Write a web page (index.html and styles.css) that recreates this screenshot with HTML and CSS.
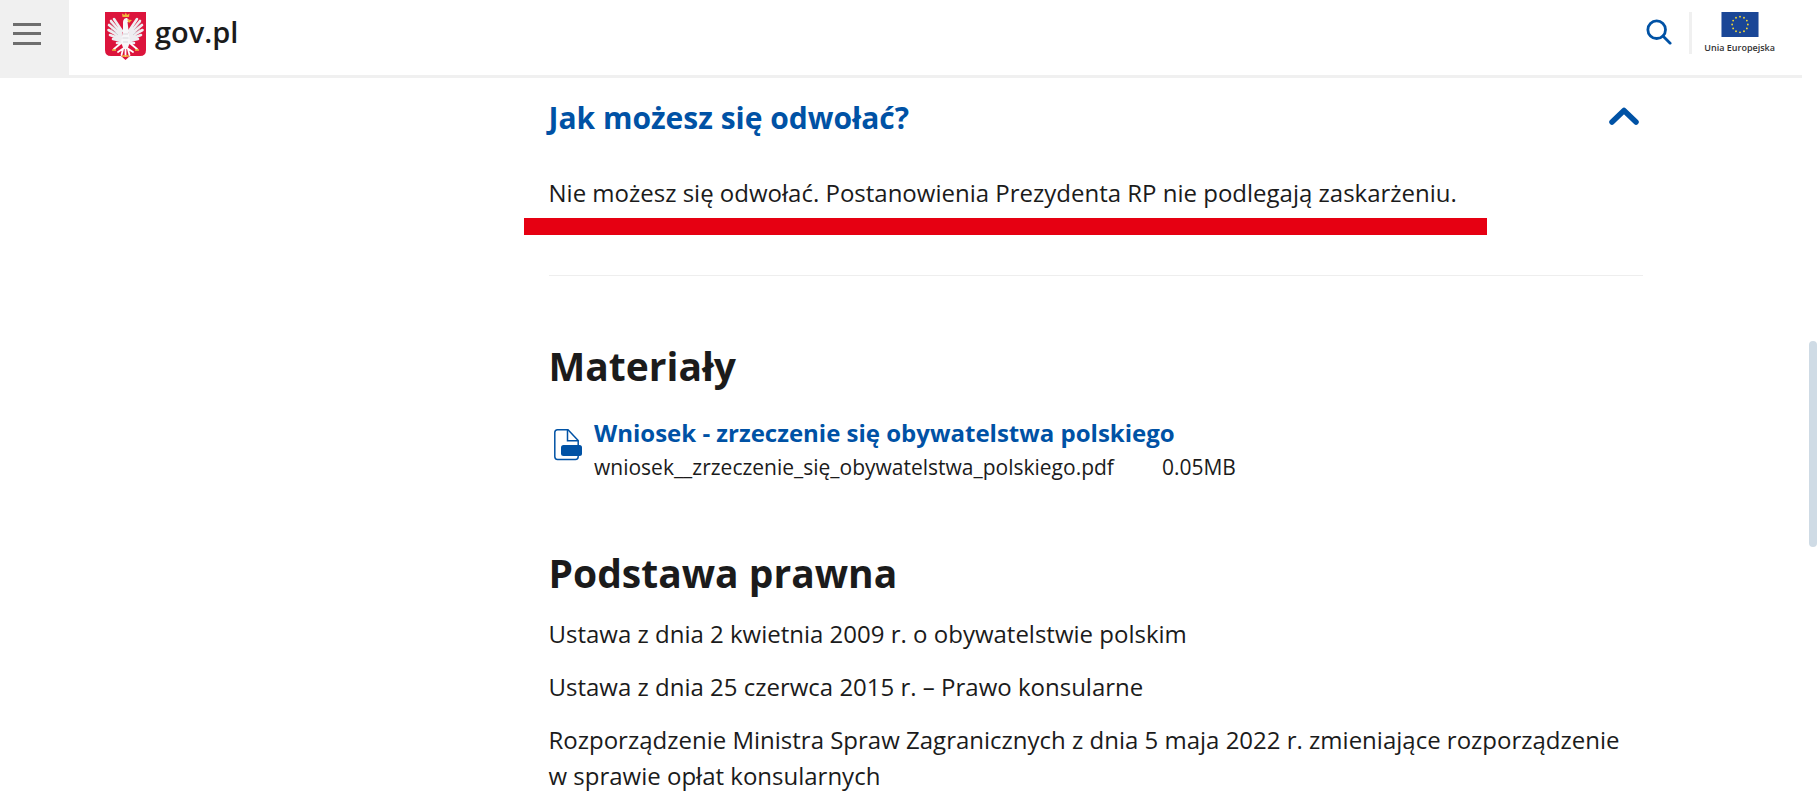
FILE: index.html
```html
<!DOCTYPE html>
<html lang="pl">
<head>
<meta charset="utf-8">
<title>gov.pl</title>
<link rel="stylesheet" href="styles.css">
</head>
<body>
<header class="topbar">
  <div class="burger"><span></span><span></span><span></span></div>
  <div class="brand">
    <svg class="emblem" width="41" height="48" viewBox="0 0 41 48">
      <path d="M0 0H41V38Q41 44 35 44H25L20.500 48L16 44H6Q0 44 0 38Z" fill="#dc143c"/>
      <g fill="none" stroke="#eeeef1" stroke-width="2.600" stroke-linecap="round">
        <path d="M17 19L9 7M16 21L6 9M16 23L4 13M16 25L3.500 18M16 27L5 23M17 29L8 27M18 31L12 31"/>
        <path d="M24 19L32 7M25 21L35 9M25 23L37 13M25 25L37.500 18M25 27L36 23M24 29L33 27M23 31L29 31"/>
      </g>
      <g fill="none" stroke="#fff" stroke-width="1.800" stroke-linecap="round">
        <path d="M15 32L9 37M26 32L32 37M19 36L13 40M22 36L28 40M20.500 36V44M18 37L16.500 43M23 37L24.500 43"/>
      </g>
      <path d="M18 11C18 7 20 6 22 6L25 9L22.500 10L23.500 18L25 30L22.500 37H18.500L16 30L18 18Z" fill="#f7f7f9"/>
      <path d="M18 22H23M17.500 26H23.500M18 30H23" stroke="#cfcfd6" stroke-width="0.800"/>
      <path d="M5 10L12 18M36 10L29 18M6 17L13 23M35 17L28 23" stroke="#c4c4cc" stroke-width="0.700"/>
      <path d="M17.500 5L17 1.500L19.500 3L20.800 .5L22 3L24.500 1.500L24 5Z" fill="#f0b93a"/>
      <path d="M22 7.500L27 8L24 11Z" fill="#f0b93a"/>
      <path d="M7 38H11M30 38H34M17 44H24" stroke="#f0b93a" stroke-width="1.400"/>
    </svg>
    <span class="brand-name">gov.pl</span>
  </div>
  <div class="tools">
    <svg class="search" width="26" height="26" viewBox="0 0 28 28" fill="none" stroke="#0052a5" stroke-width="3">
      <circle cx="11.500" cy="11.500" r="9.500"/>
      <path d="M18.500 18.500L26 26" stroke-linecap="round"/>
    </svg>
    <div class="eu">
      <svg width="40" height="27" viewBox="0 0 40 27">
        <rect width="40" height="27" fill="#1a4696"/>
        <g fill="#f4d835">
          <circle cx="20" cy="5" r="1"/><circle cx="24.300" cy="6.200" r="1"/><circle cx="27.400" cy="9.300" r="1"/>
          <circle cx="28.500" cy="13.500" r="1"/><circle cx="27.400" cy="17.700" r="1"/><circle cx="24.300" cy="20.800" r="1"/>
          <circle cx="20" cy="22" r="1"/><circle cx="15.700" cy="20.800" r="1"/><circle cx="12.600" cy="17.700" r="1"/>
          <circle cx="11.500" cy="13.500" r="1"/><circle cx="12.600" cy="9.300" r="1"/><circle cx="15.700" cy="6.200" r="1"/>
        </g>
      </svg>
      <span class="eu-label">Unia Europejska</span>
    </div>
  </div>
</header>
<main class="content">
  <section class="accordion">
    <div class="acc-head">
      <h2 class="acc-title">Jak możesz się odwołać?</h2>
      <svg class="chevron" width="30" height="18" viewBox="0 0 30 18" fill="none" stroke="#0052a5" stroke-width="5.500" stroke-linecap="round" stroke-linejoin="round">
        <path d="M3 15L15 3.500L27 15"/>
      </svg>
    </div>
    <p class="acc-text">Nie możesz się odwołać. Postanowienia Prezydenta RP nie podlegają zaskarżeniu.</p>
    <div class="redbar"></div>
  </section>
  <h2 class="section-title">Materiały</h2>
  <div class="file">
    <svg class="file-icon" width="30" height="32" viewBox="0 0 30 32" fill="none">
      <path d="M3.500 .8H14L24.200 11.500V27.500Q24.200 30.500 21.500 30.500H3.500Q.8 30.500 .8 27.500V3.500Q.8 .8 3.500 .8Z" stroke="#0052a5" stroke-width="1.500"/>
      <path d="M13.500 1V11.800H24" stroke="#0052a5" stroke-width="1.500"/>
      <rect x="7" y="16" width="21" height="11" rx="2.500" fill="#0052a5"/>
    </svg>
    <div class="file-body">
      <a class="file-link">Wniosek - zrzeczenie się obywatelstwa polskiego</a>
      <div class="file-meta"><span>wniosek__zrzeczenie_się_obywatelstwa_polskiego.pdf</span><span>0.05MB</span></div>
    </div>
  </div>
  <h2 class="section-title legal-title">Podstawa prawna</h2>
  <p class="legal">Ustawa z dnia 2 kwietnia 2009 r. o obywatelstwie polskim</p>
  <p class="legal">Ustawa z dnia 25 czerwca 2015 r. – Prawo konsularne</p>
  <p class="legal">Rozporządzenie Ministra Spraw Zagranicznych z dnia 5 maja 2022 r. zmieniające rozporządzenie w sprawie opłat konsularnych</p>
</main>
<div class="scroll-thumb"></div>
</body>
</html>
```
FILE: styles.css
```css
html, body {
  margin: 0;
  padding: 0;
  height: 100%;
  overflow: hidden;
  background: #fff;
}
body {
  font-family: "Open Sans", "Liberation Sans", sans-serif;
  color: #1b1b1b;
}
.topbar {
  display: flex;
  align-items: stretch;
  height: 75px;
  width: 1802px;
  border-bottom: 3px solid #f0f0f0;
}
.burger {
  width: 69px;
  background: #f0f0f0;
  display: flex;
  flex-direction: column;
  align-items: flex-start;
  justify-content: center;
  gap: 6.500px;
  padding-left: 13px;
  padding-bottom: 8px;
  box-sizing: border-box;
}
.burger span {
  width: 28px;
  height: 3px;
  background: #6e6e6e;
}
.brand {
  display: flex;
  align-items: center;
  margin-left: 36px;
  gap: 9px;
  padding-bottom: 3px;
}
.brand-name {
  font-size: 29px;
  font-weight: 600;
  line-height: 32px;
  margin-bottom: 8px;
}
.tools {
  margin-left: auto;
  display: flex;
  align-items: flex-start;
  padding-top: 12px;
  padding-right: 27px;
}
.search {
  margin-top: 7px;
  margin-right: 17px;
}
.eu {
  border-left: 3px solid #f0f0f0;
  height: 42px;
  padding-left: 12px;
  display: flex;
  flex-direction: column;
  align-items: center;
  gap: 5px;
}
.eu-label {
  font-size: 9px;
  font-weight: 600;
  line-height: 12px;
  color: #333;
  white-space: nowrap;
}
.content {
  width: 1094.500px;
  margin-left: 548.500px;
}
.accordion {
  border-bottom: 1px solid #eeeeee;
  padding-bottom: 40px;
}
.acc-head {
  display: flex;
  justify-content: space-between;
  align-items: center;
  padding-top: 19px;
  padding-right: 4px;
}
.acc-title {
  margin: 0;
  font-size: 30px;
  font-weight: 700;
  line-height: 42px;
  color: #0052a5;
}
.chevron {
  margin-bottom: 4px;
}
.acc-text {
  margin: 38px 0 0;
  font-size: 24px;
  line-height: 32px;
}
.redbar {
  height: 17px;
  width: 963px;
  margin: 9px 0 0 -24.500px;
  background: #e60012;
}
.section-title {
  margin: 63px 0 0;
  font-size: 39px;
  font-weight: 700;
  line-height: 54px;
}
.file {
  display: flex;
  align-items: flex-start;
  gap: 10.500px;
  margin-top: 24px;
}
.file-icon {
  margin: 12px 0 0 5px;
  flex: none;
}
.file-body {
  display: flex;
  flex-direction: column;
}
.file-link {
  font-size: 24px;
  font-weight: 700;
  line-height: 32px;
  color: #0052a5;
}
.file-meta {
  display: flex;
  gap: 48px;
  margin-top: 2px;
  font-size: 21px;
  line-height: 32px;
}
.legal-title {
  margin-top: 63px;
  margin-bottom: 16px;
}
.legal {
  margin: 0 0 17px;
  font-size: 24px;
  line-height: 36px;
}
.scroll-thumb {
  position: fixed;
  left: 1809px;
  top: 341px;
  width: 8px;
  height: 206px;
  border-radius: 4px;
  background: #cfdbe5;
}
```
